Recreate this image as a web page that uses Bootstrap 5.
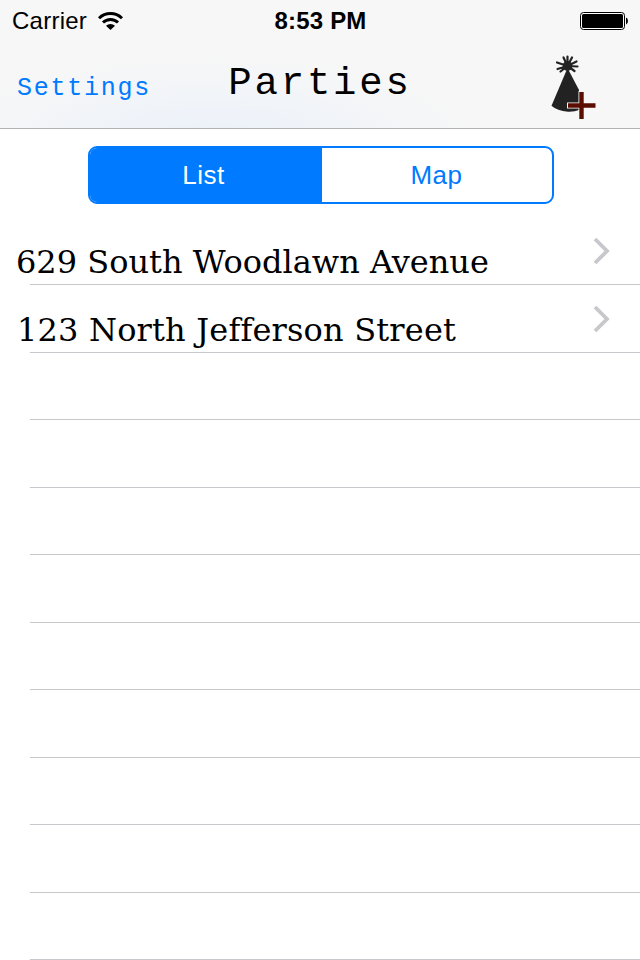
<!DOCTYPE html>
<html lang="en">
<head>
<meta charset="utf-8">
<meta name="viewport" content="width=device-width, initial-scale=1">
<title>Parties</title>
<link href="https://cdn.jsdelivr.net/npm/bootstrap@5.3.0/dist/css/bootstrap.min.css" rel="stylesheet">
<style>
  body { width: 640px; height: 960px; font-family: "Liberation Sans", Arial, sans-serif; color: #000; }
  .top-area { height: 129px; border-bottom: 1px solid #b2b2b2; background: radial-gradient(ellipse 270px 85px at 210px 140px, #ebf1fa, rgba(247,247,247,0)) #f7f7f7; }
  .status { height: 40px; font-size: 24px; line-height: 40px; padding: 1px 11px 0 12px; }
  .status-side { width: 220px; }
  .carrier { letter-spacing: .25px; }
  .clock { font-weight: 700; font-size: 24px; letter-spacing: .2px; }
  .titlebar { height: 88px; padding: 0 44px 0 17px; font-family: "Liberation Mono", "Courier New", monospace; }
  .bar-side { width: 190px; }
  .back-link { color: #007aff; font-size: 25px; letter-spacing: 1.75px; line-height: 30px; margin-top: 9px; }
  .page-title { font-size: 39px; letter-spacing: 2.8px; line-height: 44px; font-weight: 400; padding-left: 27px; }
  .hat { margin-top: 8px; }
  .segments { width: 466px; height: 58px; margin: 17px 0 13px 88px; border: 2px solid #007aff; border-radius: 9px; }
  .segments .btn { border-radius: 0; border: 0; font-size: 26px; line-height: 54px; padding: 0; color: #007aff; letter-spacing: .5px; }
  .segments .btn.active { background: #007aff; color: #fff; flex: 0 0 232px; padding-right: 5px; }
  .party-list { --bs-list-group-border-radius: 0; }
  .party-row { height: 67px; border: 0; padding: 0 30px 0 0; background: none; color: #000; }
  .party-row:nth-child(even), .party-row:first-child { height: 68px; }
  .party-row::after { content: ""; position: absolute; left: 30px; right: 0; bottom: 0; height: 1px; background: #c8c7cc; }
  .address { font-family: "DejaVu Serif", "American Typewriter", serif; font-size: 32px; line-height: 40px; padding: 25px 0 0 16px; white-space: nowrap; }
  .party-row:nth-child(2) .address { padding-left: 17px; letter-spacing: .18px; }
  .chevron { margin-top: 20px; }
</style>
<script src="https://cdn.jsdelivr.net/npm/bootstrap@5.3.0/dist/js/bootstrap.bundle.min.js"></script>
</head>
<body class="bg-white overflow-hidden">
<header class="top-area">
  <div class="status d-flex align-items-center justify-content-between">
    <div class="status-side d-flex align-items-center">
      <span class="carrier">Carrier</span>
      <svg class="ms-2" width="28" height="20" viewBox="95 10 28 20" fill="none" stroke="#000" stroke-width="2.900">
        <path d="M99 17.200a16.500 16.500 0 0 1 23 0M103 21.600a10.500 10.500 0 0 1 15 0"/>
        <path d="M106 24.800a6.500 6.500 0 0 1 9 0L110.500 29z" fill="#000" stroke="none"/>
      </svg>
    </div>
    <span class="clock">8:53 PM</span>
    <div class="status-side d-flex justify-content-end">
      <svg width="50" height="20" viewBox="0 0 50 20">
        <rect x="1.500" y="1.500" width="44" height="17" rx="3" fill="#fff" stroke="#000"/>
        <rect x="3" y="3" width="41" height="14" rx="1.500"/>
        <path d="M47 6.500q2 .8 2 3.500t-2 3.500z"/>
      </svg>
    </div>
  </div>
  <nav class="titlebar d-flex align-items-center justify-content-between">
    <div class="bar-side"><a class="back-link d-block text-decoration-none" href="#">Settings</a></div>
    <h1 class="page-title mb-0">Parties</h1>
    <a class="bar-side d-flex justify-content-end" href="#" aria-label="Add party">
      <svg class="hat" width="46" height="68" viewBox="550 54 46 68">
        <path d="M567.500 66l-4-8.500M567.500 66l0-9.500M567.500 66l4.500-8.500M567.500 66l9-4.500M567.500 66l-10.500-3.500M567.500 66l-10 3M567.500 66l10 .5M567.500 66l-7 5.500M567.500 66l7 5" stroke="#222" stroke-width="2.200" stroke-linecap="round"/>
        <circle cx="567.500" cy="66" r="4.800" fill="#222"/>
        <path d="M567.500 68l11.500 22v20q-4 2-11 1.800-11-1-16.500-6z" fill="#222"/>
        <path d="M578.500 91h6v11.500H596v6h-11.500V120h-6v-11.500H567v-6h11.500z" fill="#f7f7f7"/>
        <path d="M581.500 92v27M568 105.500h27.500" stroke="#5c0d02" stroke-width="4.400"/>
      </svg>
    </a>
  </nav>
</header>
<main>
  <div class="segments btn-group d-flex overflow-hidden" role="group" aria-label="View">
    <button class="btn active" type="button">List</button>
    <button class="btn" type="button">Map</button>
  </div>
  <ul class="party-list list-group list-group-flush">
    <li class="party-row list-group-item d-flex justify-content-between align-items-start">
      <span class="address">629 South Woodlawn Avenue</span>
      <svg class="chevron" width="17" height="28" viewBox="0 0 17 28" fill="none" stroke="#c7c7cc" stroke-width="3.800"><path d="M2 2l12 12L2 26"/></svg>
    </li>
    <li class="party-row list-group-item d-flex justify-content-between align-items-start">
      <span class="address">123 North Jefferson Street</span>
      <svg class="chevron" width="17" height="28" viewBox="0 0 17 28" fill="none" stroke="#c7c7cc" stroke-width="3.800"><path d="M2 2l12 12L2 26"/></svg>
    </li>
    <li class="party-row list-group-item"></li>
    <li class="party-row list-group-item"></li>
    <li class="party-row list-group-item"></li>
    <li class="party-row list-group-item"></li>
    <li class="party-row list-group-item"></li>
    <li class="party-row list-group-item"></li>
    <li class="party-row list-group-item"></li>
    <li class="party-row list-group-item"></li>
    <li class="party-row list-group-item"></li>
  </ul>
</main>
</body>
</html>
